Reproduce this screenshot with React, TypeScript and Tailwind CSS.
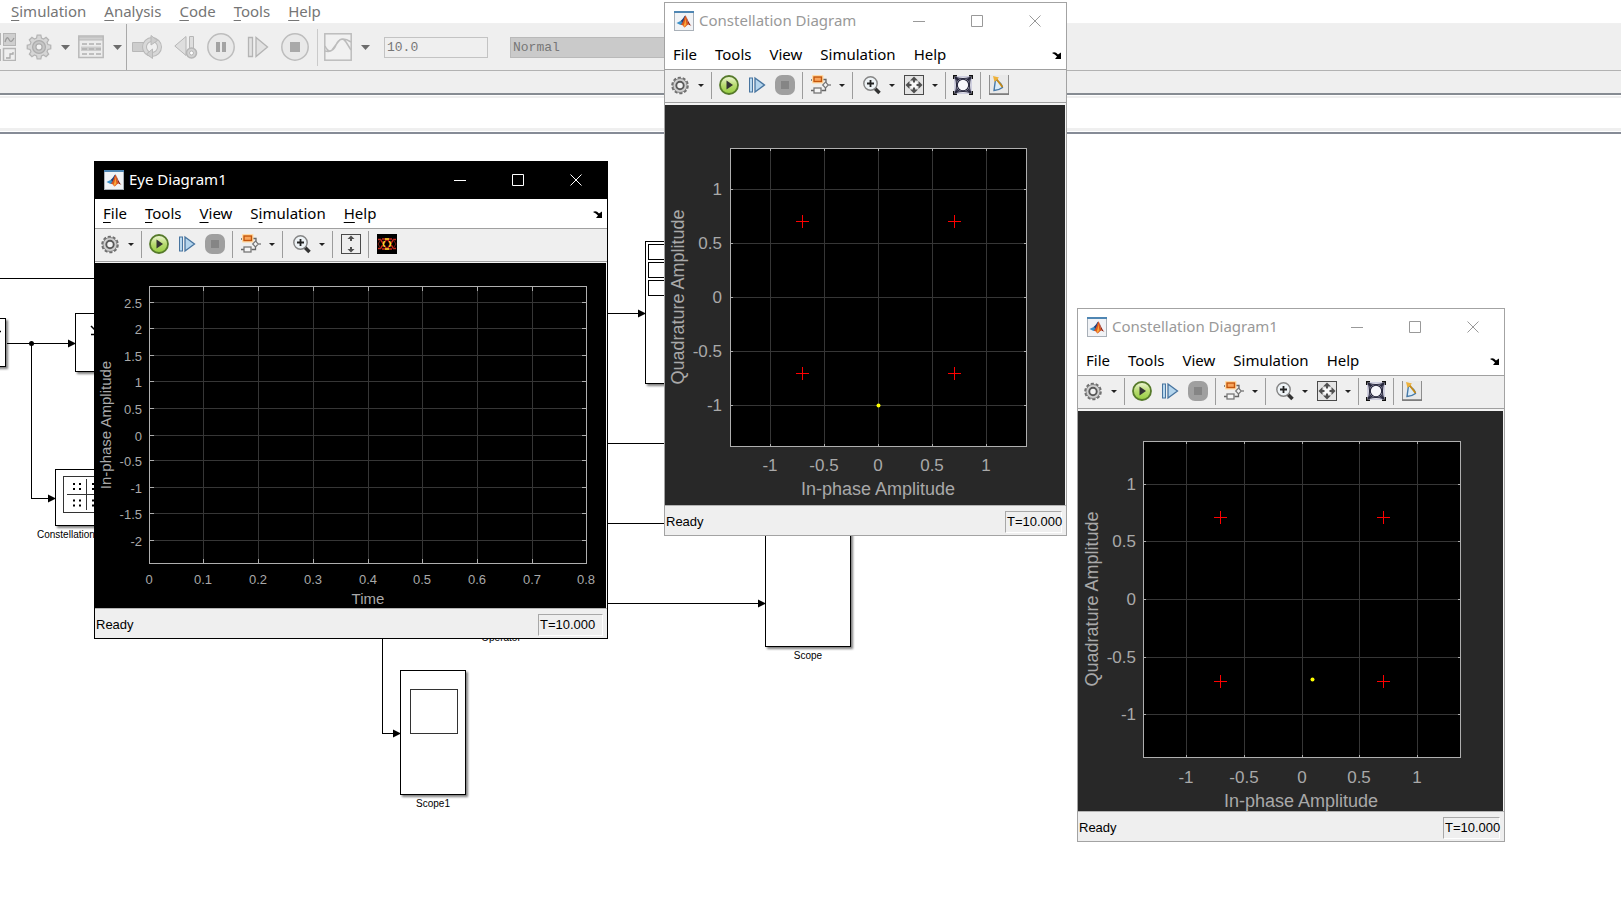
import { useState } from "react";
import type { ReactNode } from "react";

type Tick = { at: number; label: string };

type ChartData = {
    name: string;
    w: number;
    h: number;
    left: number;
    right: number;
    top: number;
    bottom: number;
    bg: string;
    xs: Tick[];
    ys: Tick[];
    tickSize: number;
    titleSize: number;
    xTitle: { text: string; x: number; y: number };
    yTitle: { text: string; x: number; y: number };
    labelRight: number;
    labelBase: number;
    tickLen: number;
    refs?: number[][];
    point?: number[];
};

const ticks = (at: number[], labels: string[]): Tick[] => at.map((a, i) => ({ at: a, label: labels[i] }));

const amp = ["-1", "-0.5", "0", "0.5", "1"];
const ampDown = ["1", "0.5", "0", "-0.5", "-1"];

const constellation: ChartData = {
    name: "Constellation Diagram",
    w: 400, h: 400, left: 65, right: 361, top: 43, bottom: 341, bg: "#282828",
    xs: ticks([105, 159, 213, 267, 321], amp),
    ys: ticks([84, 138, 192, 246, 300], ampDown),
    tickSize: 17, titleSize: 18, tickLen: 2,
    xTitle: { text: "In-phase Amplitude", x: 213, y: 390 },
    yTitle: { text: "Quadrature Amplitude", x: 19, y: 192 },
    labelRight: 57, labelBase: 366,
    refs: [[137, 116], [289, 116], [137, 268], [289, 268]],
    point: [213, 300],
};

const constellation1: ChartData = {
    name: "Constellation Diagram1",
    w: 425, h: 400, left: 65, right: 382, top: 30, bottom: 346, bg: "#282828",
    xs: ticks([108, 166, 224, 281, 339], amp),
    ys: ticks([73, 130, 188, 246, 303], ampDown),
    tickSize: 17, titleSize: 18, tickLen: 2,
    xTitle: { text: "In-phase Amplitude", x: 223, y: 396 },
    yTitle: { text: "Quadrature Amplitude", x: 20, y: 188 },
    labelRight: 58, labelBase: 372,
    refs: [[142, 106], [305, 106], [142, 270], [305, 270]],
    point: [234, 268],
};

const eye: ChartData = {
    name: "Eye Diagram1",
    w: 511, h: 345, left: 54, right: 491, top: 23, bottom: 300, bg: "#000000",
    xs: ticks([54, 108, 163, 218, 273, 327, 382, 437, 491], ["0", "0.1", "0.2", "0.3", "0.4", "0.5", "0.6", "0.7", "0.8"]),
    ys: ticks([39, 65, 92, 118, 145, 172, 197, 224, 250, 277], ["2.5", "2", "1.5", "1", "0.5", "0", "-0.5", "-1", "-1.5", "-2"]),
    tickSize: 13, titleSize: 15, tickLen: 4,
    xTitle: { text: "Time", x: 273, y: 341 },
    yTitle: { text: "In-phase Amplitude", x: 16, y: 162 },
    labelRight: 47, labelBase: 321,
};

function Chart({ d }: { d: ChartData }) {
    const t = d.tickLen;
    return (
        <svg viewBox={`0 0 ${d.w} ${d.h}`} className="block w-full" role="img" aria-label={d.name} fontFamily="Liberation Sans, Arial, sans-serif" fill="#a9a9a9">
            <rect width={d.w} height={d.h} fill={d.bg} />
            <rect x={d.left} y={d.top} width={d.right - d.left} height={d.bottom - d.top} fill="#000" />
            <g shapeRendering="crispEdges">
                {d.xs.map((x) => (
                    <g key={x.label}>
                        <path d={`M${x.at + 0.5} ${d.top}V${d.bottom}`} stroke="#363636" />
                        <path d={`M${x.at + 0.5} ${d.top}v${t + 1}M${x.at + 0.5} ${d.bottom}v-${t}`} stroke="#afafaf" />
                    </g>
                ))}
                {d.ys.map((y) => (
                    <g key={y.label}>
                        <path d={`M${d.left} ${y.at + 0.5}H${d.right}`} stroke="#363636" />
                        <path d={`M${d.left} ${y.at + 0.5}h${t + 1}M${d.right} ${y.at + 0.5}h-${t}`} stroke="#afafaf" />
                    </g>
                ))}
                <rect x={d.left + 0.5} y={d.top + 0.5} width={d.right - d.left} height={d.bottom - d.top} fill="none" stroke="#afafaf" />
                {d.refs?.map(([x, y]) => (
                    <path key={`${x}-${y}`} d={`M${x - 6} ${y + 0.5}h13M${x + 0.5} ${y - 6}v13`} stroke="#f00" />
                ))}
            </g>
            {d.point && <circle cx={d.point[0] + 0.5} cy={d.point[1] + 0.5} r="2" fill="#ff0" />}
            {d.xs.map((x) => (
                <text key={x.label} x={x.at} y={d.labelBase} fontSize={d.tickSize} textAnchor="middle">{x.label}</text>
            ))}
            {d.ys.map((y) => (
                <text key={y.label} x={d.labelRight} y={y.at + 6} fontSize={d.tickSize} textAnchor="end">{y.label}</text>
            ))}
            <text x={d.xTitle.x} y={d.xTitle.y} fontSize={d.titleSize} textAnchor="middle">{d.xTitle.text}</text>
            <text transform={`translate(${d.yTitle.x} ${d.yTitle.y}) rotate(-90)`} fontSize={d.titleSize} textAnchor="middle">{d.yTitle.text}</text>
        </svg>
    );
}

/* ---------- window icons ---------- */

function MatlabIcon() {
    return (
        <svg viewBox="0 0 20 20" className="size-5">
            <rect x=".5" y=".5" width="19" height="19" fill="#f1f3f6" stroke="#a9b0b8" />
            <rect width="20" height="2" fill="#4f86b3" />
            <path d="M2.5 12 6.5 10 9 11.5 6.5 14Z" fill="#3a8fc8" />
            <path d="M6.5 10C9 8.5 10 5 11.5 4.5L9 13.5 6.5 14 8.5 11.5Z" fill="#1c3f7c" />
            <path d="M11.5 4.5C10 7 9.5 10.5 7 14 9 13.5 9.5 16 10.5 16.5 12 16 13 13.5 14.5 13.5 13.5 10 12.5 5.5 11.5 4.5Z" fill="#d9541e" />
            <path d="M11.5 4.5C13 6.5 14.5 11.5 17.5 15 15.5 14 14.5 13.5 14.5 13.5 13.5 10 12.5 5.5 11.5 4.5Z" fill="#8c1d12" />
            <path d="M11.3 6.5C11 10 10.5 13 9.5 14.5L10.5 16 12.5 13.5Z" fill="#f9a63a" />
        </svg>
    );
}

function GearIcon() {
    return (
        <svg viewBox="0 0 20 20" className="size-5">
            <circle cx="10" cy="10.5" r="7.6" fill="none" stroke="#6e6e6e" strokeWidth="2.4" strokeDasharray="3 1.775" />
            <circle cx="10" cy="10.5" r="7" fill="#d0d0d0" stroke="#858585" />
            <circle cx="10" cy="10.5" r="3.7" fill="#f4f4f4" stroke="#5a5a5a" strokeWidth="1.9" />
        </svg>
    );
}

function PlayIcon() {
    return (
        <svg viewBox="0 0 20 20" className="size-5">
            <defs>
                <linearGradient id="play" x1="0" y1="0" x2="0" y2="1">
                    <stop offset="0" stopColor="#f2f9dc" />
                    <stop offset=".5" stopColor="#b9dc72" />
                    <stop offset="1" stopColor="#94cc3e" />
                </linearGradient>
            </defs>
            <circle cx="10" cy="10" r="9" fill="url(#play)" stroke="#567a2b" strokeWidth="1.8" />
            <path d="M7.5 5.5 14 10 7.5 14.5Z" fill="#333" />
        </svg>
    );
}

function StepIcon() {
    return (
        <svg viewBox="0 0 20 20" className="size-5">
            <rect x="2.5" y="3" width="3" height="14" fill="#b9d8ee" stroke="#47749f" />
            <path d="M8 3v14l9.5-7Z" fill="#b4d5ed" stroke="#47749f" strokeWidth="1.3" />
        </svg>
    );
}

function StopIcon() {
    return (
        <svg viewBox="0 0 20 20" className="size-5">
            <rect width="20" height="20" rx="7" fill="#9f9f9f" />
            <rect x="6" y="6" width="8" height="8" fill="#858585" />
        </svg>
    );
}

function TreeIcon() {
    return (
        <svg viewBox="-1 0 20 20" className="size-5">
            <path d="M10 4.500h4V8M9.500 15.500h4V12M-1 5h3M-1 15.500h3" fill="none" stroke="#666" strokeWidth="1.3" />
            <rect x="0" y="0" width="11.5" height="8.5" rx="1" fill="#ffd9a3" />
            <rect x="2" y="2" width="7.500" height="4.500" fill="#f8a55c" stroke="#c4560c" strokeWidth="1.4" />
            <rect x="2" y="13" width="7" height="5" fill="#f5f5f5" stroke="#777" strokeWidth="1.3" />
            <path d="M13.5 7.200 16.300 10l-2.800 2.800L10.700 10Z" fill="#f5f5f5" stroke="#777" strokeWidth="1.2" />
            <path d="M16.500 10h2.500" stroke="#777" strokeWidth="1.3" />
        </svg>
    );
}

function ZoomIcon() {
    return (
        <svg viewBox="-1 0 20 20" className="size-5">
            <path d="m12.5 13 5 5" stroke="#333" strokeWidth="3.6" />
            <circle cx="8.5" cy="8.5" r="6.7" fill="#eef3f6" stroke="#858585" strokeWidth="1.4" />
            <path d="M8.5 5v7M5 8.500h7" stroke="#222" strokeWidth="1.8" />
        </svg>
    );
}

function FitIcon() {
    return (
        <svg viewBox="0 0 20 20" className="size-5">
            <rect x=".5" y=".5" width="19" height="19" fill="#e4e4e4" stroke="#4a4a4a" />
            <rect x="7" y="7" width="6" height="6" fill="#fafafa" />
            <path d="M10 1.500 14 5.500h-3v2H9v-2H6ZM10 18.500 6 14.500h3v-2h2v2h3ZM1.500 10 5.500 6v3h2v2h-2v3ZM18.500 10 14.500 14v-3h-2V9h2V6Z" fill="#4f4f4f" />
        </svg>
    );
}

function FitYIcon() {
    return (
        <svg viewBox="0 0 20 20" className="size-5">
            <rect x=".5" y=".5" width="19" height="19" fill="#eee" stroke="#4a4a4a" />
            <path d="M10 1.500 13.500 5H11v2H9V5H6.500ZM10 18.500 6.500 15H9v-2h2v2h2.500Z" fill="#4f4f4f" />
        </svg>
    );
}

function EyeIcon() {
    return (
        <svg viewBox="0 0 20 20" className="size-5" fill="none">
            <rect width="20" height="20" fill="#000" />
            <path d="M1 5.500h2.500l6 9M1 14.500h2.500l6-9M19 5.500h-2.500l-6 9M19 14.500h-2.500l-6-9M5 5h10M5 15h10" stroke="#c9291c" strokeWidth="1.4" />
            <path d="M1 10l3-4.500M1 10l3 4.500M19 10l-3-4.500M19 10l-3 4.500" stroke="#7d1a12" />
            <path d="M8 5h4M8 15h4M7.500 7 6.300 10l1.200 3M12.500 7l1.200 3-1.200 3" stroke="#f1dc2a" strokeWidth="1.5" />
        </svg>
    );
}

function TrajectoryIcon() {
    return (
        <svg viewBox="0 0 20 20" className="size-5" fill="none" stroke="#26263c" strokeWidth="1.1">
            <rect x="1" y="1" width="18" height="18" fill="#cfcfe0" stroke="none" />
            <path d="M6 2.500h8L10 5ZM6 17.500h8L10 15ZM2.500 6v8L5 10ZM17.500 6v8L15 10Z" fill="#f4f4f8" stroke="none" />
            <circle cx="10" cy="10" r="5.700" fill="#f7f7fb" />
            <path d="M2 2l5 3.500M18 2l-5 3.500M2 18l5-3.500M18 18l-5-3.500M2 2l3.500 5M18 2l-3.500 5M2 18l3.500-5M18 18l-3.500-5" />
            <path d="M2.500 2.500Q4.500 10 2.500 17.500M17.500 2.500q-2 7.500 0 15M2.500 2.500q7.500 2 15 0M2.500 17.500q7.500-2 15 0" />
            <g stroke="#111">
                <path d="M.7 4V.7H4M16 .7h3.300V4M.7 16v3.300H4M16 19.300h3.300V16" strokeWidth="1.4" />
            </g>
        </svg>
    );
}

function MeasureIcon() {
    return (
        <svg viewBox="0 0 20 20" className="size-5">
            <rect width="20" height="20" fill="#e9e9e9" />
            <path d="M.5 0v19.500H20M19.500 0v20" fill="none" stroke="#8e8e8e" />
            <path d="M0 19h20" stroke="#777" strokeWidth="1.5" />
            <path d="M5 15.500 6.500 4.500Q13 8 13.500 12.500 9.500 15.500 5 15.500Z" fill="#dcecf7" stroke="#4679a8" strokeWidth="1.4" />
            <path d="m7 3.500 6.500 8.500" stroke="#c98a13" strokeWidth="1.8" />
            <path d="M4 1 10 2.500 5.500 7Z" fill="#eeb13a" />
        </svg>
    );
}

function DockIcon() {
    return (
        <svg viewBox="0 0 10 8" className="h-2 w-2.5">
            <path d="M0 2Q3 0 6 3.500L9 1.500V8H3L5 5.500Q3 3 0 2Z" fill="#000" />
        </svg>
    );
}

function Caret({ label }: { label: string }) {
    return (
        <button type="button" aria-label={label} className="flex w-[21px] items-center justify-center self-stretch">
            <svg viewBox="0 0 6 3" className="h-[3px] w-1.5"><path d="M0 0h6L3 3Z" fill="#222" /></svg>
        </button>
    );
}

function Tool({ label, children }: { label: string; children: ReactNode }) {
    return <button type="button" aria-label={label} title={label}>{children}</button>;
}

function Group({ children, className = "border-r pl-2" }: { children: ReactNode; className?: string }) {
    return <div className={`flex h-[27px] items-center border-[#9c9c9c] ${className}`}>{children}</div>;
}

/* underlines the shortcut letter of a menu entry */
function MenuItem({ text, mark }: { text: string; mark?: number }) {
    return (
        <button type="button">
            {mark === undefined ? text : (
                <>{text.slice(0, mark)}<span className="underline underline-offset-3">{text[mark]}</span>{text.slice(mark + 1)}</>
            )}
        </button>
    );
}

type WindowProps = {
    title: string;
    active?: boolean;
    place: string;
    chart: ChartData;
    tools: ReactNode;
    timeWidth: string;
};

function ScopeWindow({ title, active, place, chart, tools, timeWidth }: WindowProps) {
    const marks = active ? [0, 0, 0, 1, 0] : [];
    return (
        <section className={`absolute border bg-white ${active ? "border-black" : "border-[#a3a3a3]"} ${place}`}>
            <header className={`flex h-[37px] items-center pr-0.5 pb-0.5 pl-[9px] ${active ? "bg-black text-white" : "bg-white text-[#999]"}`}>
                <MatlabIcon />
                <h2 className="flex-1 pl-[5px] text-[15px]">{title}</h2>
                {[
                    { label: "Minimize", d: "M0 6.500h12" },
                    { label: "Maximize", d: "M.5.5h11v11H.5Z" },
                    { label: "Close", d: "m.5.5 11 11m0-11-11 11" },
                ].map((b) => (
                    <button key={b.label} type="button" aria-label={b.label} className="flex h-full w-[58px] items-center justify-center">
                        <svg viewBox="0 0 12 12" className="size-3" fill="none" stroke="currentColor"><path d={b.d} /></svg>
                    </button>
                ))}
            </header>
            <nav className="flex h-[30px] items-center gap-[18px] border-b border-[#a0a0a0] pr-1 pl-2 text-[15px] text-black">
                {["File", "Tools", "View", "Simulation", "Help"].map((m, i) => <MenuItem key={m} text={m} mark={marks[i]} />)}
                <button type="button" aria-label="Dock" className="ml-auto"><DockIcon /></button>
            </nav>
            <div className="flex h-[33px] items-center border-b border-[#a0a0a0] bg-[#efefef] pb-0.5 pl-[5px]">
                <Group className="border-r">
                    <Tool label="Configuration"><GearIcon /></Tool>
                    <Caret label="Configuration options" />
                </Group>
                <Group className="gap-2 border-r px-[7px]">
                    <Tool label="Run"><PlayIcon /></Tool>
                    <Tool label="Step forward"><StepIcon /></Tool>
                    <Tool label="Stop"><StopIcon /></Tool>
                </Group>
                <Group>
                    <Tool label="Highlight block"><TreeIcon /></Tool>
                    <Caret label="Highlight options" />
                </Group>
                {tools}
            </div>
            <div className={`border-r border-[#f4f4f4] bg-[#f4f4f4] ${active ? "pt-px" : "pt-0.5"}`}>
                <Chart d={chart} />
            </div>
            <footer className="flex h-[30px] items-center border-t border-[#b4b4b4] bg-[#efefef] pt-0.5 pr-1 pl-px font-[Liberation_Sans,Arial,sans-serif] text-[13px] text-black">
                <span className="flex-1">Ready</span>
                <span className={`h-[22px] border border-t-[#a8a8a8] border-r-white border-b-white border-l-[#a8a8a8] pl-px leading-5 ${timeWidth}`}>T=10.000</span>
            </footer>
        </section>
    );
}

const constellationTools = (
    <>
        <Group>
            <Tool label="Zoom in"><ZoomIcon /></Tool>
            <Caret label="Zoom options" />
            <div className="flex items-center self-stretch pl-0.5">
                <Tool label="Scale axes"><FitIcon /></Tool>
                <Caret label="Scale options" />
            </div>
        </Group>
        <Group className="border-r px-[7px]"><Tool label="Signal trajectory"><TrajectoryIcon /></Tool></Group>
        <Group className="pl-2"><Tool label="Signal quality"><MeasureIcon /></Tool></Group>
    </>
);

const eyeTools = (
    <>
        <Group>
            <Tool label="Zoom in"><ZoomIcon /></Tool>
            <Caret label="Zoom options" />
        </Group>
        <Group className="border-r pr-[7px] pl-2"><Tool label="Scale Y axis"><FitYIcon /></Tool></Group>
        <Group className="pl-2"><Tool label="Eye diagram"><EyeIcon /></Tool></Group>
    </>
);

/* ---------- model editor ---------- */

const gearPath = "M8.5 1h3l.5 2.300 1.700.7 2-1.300 2.100 2.100-1.300 2 .7 1.700L19.500 9v3l-2.300.5-.7 1.700 1.300 2-2.100 2.100-2-1.300-1.700.7-.5 2.300h-3L8 17.700 6.300 17l-2 1.300-2.100-2.100 1.300-2-.7-1.700L.5 12V9l2.300-.5.7-1.700-1.300-2 2.100-2.100 2 1.300L8 3.300Z";

function EditorCaret({ label }: { label: string }) {
    return (
        <button type="button" aria-label={label} className="flex h-7 w-[26px] items-center justify-center">
            <svg viewBox="0 0 9 5" className="h-[5px] w-[9px]"><path d="M0 0h9L4.500 5Z" fill="#6c6c6c" /></svg>
        </button>
    );
}

function EditorBar() {
    const [stopTime, setStopTime] = useState("10.0");
    return (
        <div className="flex h-[47px] items-center border-b border-[#b2b2b2] bg-[#efefef]">
            <button type="button" aria-label="Library">
                <svg viewBox="0 0 16 28" className="h-7 w-4" fill="#dcdcdc" stroke="#b5b5b5">
                    <path d="M0 0v12M0 16v12" strokeWidth="2" />
                    <rect x="3.500" y=".5" width="12" height="12" fill="#cfcfcf" />
                    <rect x="3.500" y="15.500" width="12" height="12" fill="#efefef" strokeWidth="1.5" />
                    <path d="M5 9q2-7 4-2.500t5-1.500" fill="none" stroke="#9c9c9c" strokeWidth="1.3" />
                    <path d="M6 25h4v-4h3v-2" fill="none" stroke="#a9a9a9" strokeWidth="1.3" />
                </svg>
            </button>
            <button type="button" aria-label="Model configuration" className="pl-2.5">
                <svg viewBox="0 0 20 21" className="size-[26px]">
                    <path d={gearPath} fill="#d6d6d6" stroke="#b4b4b4" />
                    <circle cx="10" cy="10.500" r="5.200" fill="#c6c6c6" stroke="#adadad" />
                    <circle cx="10" cy="10.500" r="2.500" fill="#f2f2f2" stroke="#adadad" />
                </svg>
            </button>
            <EditorCaret label="Configuration options" />
            <button type="button" aria-label="Model explorer">
                <svg viewBox="0 0 26 24" className="h-6 w-[26px]" fill="none" stroke="#b9b9b9">
                    <rect x=".8" y="1" width="24.400" height="21.500" fill="#ececec" strokeWidth="1.5" />
                    <path d="M1 2h24v3H1Z" fill="#d0d0d0" />
                    <path d="M3 11.500h20v4.500H3Z" fill="#cccccc" stroke="none" />
                    <path d="M4 9h5m2 0h5m2 0h5M4 14h5m2 0h5m2 0h5M4 19h5m2 0h5m2 0h5" stroke="#b0b0b0" strokeWidth="1.3" />
                </svg>
            </button>
            <div className="-mr-1"><EditorCaret label="Explorer options" /></div>
            <div className="h-full w-px bg-[#a9a9a9]" />
            <button type="button" aria-label="Update diagram" className="pl-[5px]">
                <svg viewBox="0 0 30 24" className="h-6 w-[30px]" fill="#cdcdcd" stroke="#b8b8b8">
                    <path d="M.5 7.500h12v9H.5Z" />
                    <circle cx="20" cy="12" r="7.500" fill="none" stroke="#b8b8b8" strokeWidth="5" />
                    <circle cx="20" cy="12" r="7.500" fill="none" stroke="#d8d8d8" strokeWidth="3" />
                    <path d="M19 .5 25.500 5.500 19 10Z" />
                    <path d="M20.500 14v9.500L14.500 19Z" />
                </svg>
            </button>
            <button type="button" aria-label="Step back" className="pl-3">
                <svg viewBox="0 0 24 26" className="h-[26px] w-6" fill="#dedede" stroke="#b6b6b6">
                    <path d="M12 2.500v19L.8 12Z" />
                    <path d="M15.500 2.500h4v13h-4Z" />
                    <circle cx="17.500" cy="19" r="5" fill="#d2d2d2" strokeWidth="1.6" />
                    <circle cx="17.500" cy="19" r="2" fill="#fff" />
                </svg>
            </button>
            <button type="button" aria-label="Pause" className="pl-[9px]">
                <svg viewBox="0 0 28 28" className="size-7">
                    <circle cx="14" cy="14" r="13.200" fill="#e9e9e9" stroke="#bdbdbd" strokeWidth="1.5" />
                    <path d="M9 9h4v10H9ZM15 9h4v10h-4Z" fill="#a3a3a3" />
                </svg>
            </button>
            <button type="button" aria-label="Step forward" className="pl-3">
                <svg viewBox="0 0 22 22" className="size-[22px]" fill="#e2e2e2" stroke="#b4b4b4" strokeWidth="1.3">
                    <path d="M1.500 1.500h4v19h-4ZM9 1.500v19L20.500 11Z" />
                </svg>
            </button>
            <button type="button" aria-label="Stop" className="pl-3">
                <svg viewBox="0 0 28 28" className="size-7">
                    <circle cx="14" cy="14" r="13.200" fill="#e9e9e9" stroke="#bdbdbd" strokeWidth="1.5" />
                    <path d="M9 9h10v10H9Z" fill="#a9a9a9" />
                </svg>
            </button>
            <div className="ml-2 h-[37px] w-px bg-[#cacaca]" />
            <button type="button" aria-label="Simulation data" className="pl-1.5">
                <svg viewBox="0 0 28 28" className="size-7" fill="none" stroke="#bcbcbc" strokeWidth="1.5">
                    <rect x=".8" y=".8" width="26.400" height="26.400" fill="#f1f1f1" />
                    <path d="M1 13Q4 20 8 17L14 9Q18 3 22 9L27 17M1 18Q9 20 12 12 16 2 27 9" />
                </svg>
            </button>
            <EditorCaret label="Data options" />
            <input
                type="text"
                aria-label="Stop time"
                value={stopTime}
                onChange={(e) => setStopTime(e.target.value)}
                className="ml-1.5 h-[21px] w-[104px] border border-[#c3c3c3] bg-[#efefef] px-0.5 font-[Liberation_Mono,monospace] text-[13px] text-[#777]"
            />
            <select
                aria-label="Simulation mode"
                defaultValue="Normal"
                className="ml-[22px] h-[21px] w-[240px] appearance-none border border-[#b9b9b9] bg-[#cacaca] px-0.5 font-[Liberation_Mono,monospace] text-[13px] text-[#777]"
            >
                <option>Normal</option>
                <option>Accelerator</option>
            </select>
        </div>
    );
}

const block = "drop-shadow-[2px_2px_1px_rgba(0,0,0,0.5)]";

/* blocks and wires, in page units, the canvas starts at y = 134 */
function Model() {
    return (
        <svg viewBox="0 134 1621 788" className="block w-full" role="img" aria-label="Model" fill="#fff" stroke="#000" fontFamily="Liberation Sans, Arial, sans-serif" fontSize="10">
            <g shapeRendering="crispEdges" fill="none">
                <path d="M0 278.500h100M7 343.500h66M31.500 343.500v155h20M608 313.500h36M608 443.500h60M608 523.500h60M608 603.500h156M382.500 630v103.500h14" />
            </g>
            <g stroke="none" fill="#000">
                <circle cx="31.500" cy="343.500" r="2.500" />
                <path d="M68 339.500 76 343.500 68 347.500ZM48 494.500 56 498.500 48 502.500ZM638 309.500 646 313.500 638 317.500ZM758 599.500 766 603.500 758 607.500ZM393 729.500 401 733.500 393 737.500Z" />
            </g>
            <rect x="-20" y="318.500" width="25.500" height="48" className={block} />
            <rect x="75.500" y="313.500" width="60" height="58" className={block} />
            <rect x="55.500" y="469.500" width="66" height="56" className={block} />
            <rect x="645.500" y="241.500" width="60" height="142" className={block} />
            <rect x="765.500" y="520.500" width="85" height="126" className={block} />
            <rect x="400.500" y="670.500" width="65" height="124" className={block} />
            <g shapeRendering="crispEdges">
                <path d="M648.500 244.500h30v15h-30ZM648.500 262.500h30v15h-30ZM648.500 280.500h30v15h-30Z" />
                <path d="M63.500 476.500h50v36h-50Z" stroke="#333" />
                <path d="M410.500 689.500h47v44h-47Z" stroke="#333" />
                <path d="M67 494.500h40M86.500 479v31" stroke="#333" />
            </g>
            <path d="M91 326l4 4M91 334.500h4M-1 331.500h2" strokeWidth="1.5" />
            <path d="M73 484h2M79 484h2M73 489h2M79 489h2M73 500.500h2M79 500.500h2M73 505.500h2M79 505.500h2M92 484h2M92 489h2M92 500.500h2M92 505.500h2" strokeWidth="2" />
            <g stroke="none" fill="#000">
                <text x="37" y="538">Constellation</text>
                <text x="501" y="641" textAnchor="middle">Operator</text>
                <text x="808" y="659" textAnchor="middle">Scope</text>
                <text x="433" y="807" textAnchor="middle">Scope1</text>
            </g>
        </svg>
    );
}

export default function App() {
    return (
        <main className="relative min-h-screen overflow-hidden bg-white font-[Noto_Sans,Open_Sans,sans-serif]">
            <nav className="flex h-6 items-center gap-[18px] border-b border-[#f0f0f0] pl-[11px] text-[15px] text-[#757575]">
                {["Simulation", "Analysis", "Code", "Tools", "Help"].map((m) => <MenuItem key={m} text={m} mark={0} />)}
            </nav>
            <EditorBar />
            <div className="h-6 border-b-2 border-[#868b92] bg-[#efefef]" />
            <div className="h-[39px] border-b-2 border-[#868b96] pt-px pb-px">
                <div className="h-full border-t-2 border-b-3 border-[#efefef]" />
            </div>
            <Model />

            <ScopeWindow title="Eye Diagram1" active place="left-[94px] top-[161px] w-[514px]" chart={eye} tools={eyeTools} timeWidth="w-[65px]" />
            <ScopeWindow title="Constellation Diagram" place="left-[664px] top-[2px] w-[403px]" chart={constellation} tools={constellationTools} timeWidth="w-[57px]" />
            <ScopeWindow title="Constellation Diagram1" place="left-[1077px] top-[308px] w-[428px]" chart={constellation1} tools={constellationTools} timeWidth="w-[57px]" />
        </main>
    );
}
